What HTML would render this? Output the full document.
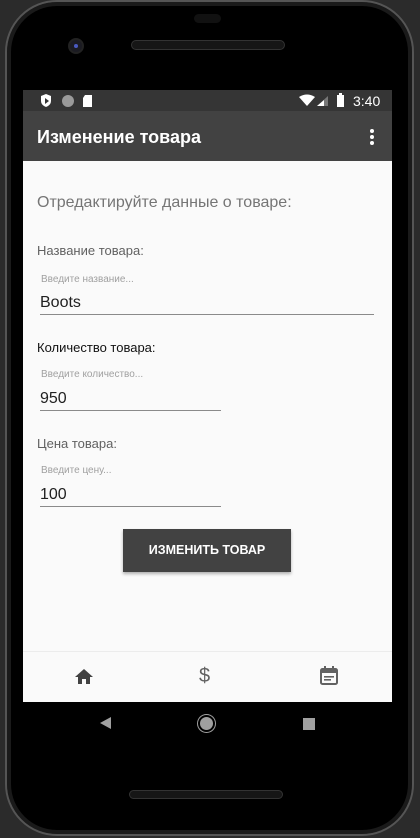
<!DOCTYPE html>
<html><head><meta charset="utf-8"><style>
*{margin:0;padding:0;box-sizing:border-box}
body{width:420px;height:838px;background:#2b2b2b;position:relative;overflow:hidden;font-family:"Liberation Sans","DejaVu Sans",sans-serif}
.phone{position:absolute;left:5px;top:0;width:409px;height:836px;background:#000;border-radius:52px;border:2px solid #555;box-shadow:inset 0 0 0 4px #1a1a1a}
.a{position:absolute;white-space:nowrap}
.screen{position:absolute;left:23px;top:90px;width:369px;height:612px;background:#fafafa;overflow:hidden}
.line{position:absolute;height:1px;background:#8a8a8a}
</style></head><body>
<div class="phone"></div>
<div class="a" style="left:194px;top:14px;width:27px;height:9px;border-radius:5px;background:#111"></div>
<div class="a" style="left:131px;top:40px;width:154px;height:10px;border-radius:5px;background:#161616;border:1px solid #333"></div>
<div class="a" style="left:68px;top:38px;width:16px;height:16px;border-radius:50%;background:#1b1b22;border:2px solid #222"></div>
<div class="a" style="left:74px;top:44px;width:4px;height:4px;border-radius:50%;background:#4a5ac0"></div>
<div class="screen">
  <div class="a" style="left:0;top:0;width:369px;height:21px;background:#353535"></div>
  <div class="a" style="left:0;top:21px;width:369px;height:50px;background:#424242"></div>
  <svg class="a" style="left:16px;top:3px" width="80" height="16">
    <path d="M2 3 L7 1 L12 3 L12 8 Q12 12 7 14 Q2 12 2 8Z" fill="#fff"/><path d="M6 5 L10 8 L6 11Z" fill="#353535"/>
    <circle cx="29" cy="8" r="6" fill="#9a9a9a"/>
    <path d="M46 2 L53 2 L53 14 L44 14 L44 5Z" fill="#fff"/>
  </svg>
  <svg class="a" style="left:276px;top:3px" width="50" height="16">
    <path d="M0 4 Q8 -1 16 4 L8 13Z" fill="#fff"/>
    <path d="M18 13 L29 13 L29 3Z" fill="#777"/><path d="M18 13 L25 13 L25 7Z" fill="#fff"/>
    <rect x="38" y="2" width="7" height="12" fill="#fff"/><rect x="40" y="0" width="3" height="2" fill="#fff"/>
  </svg>
  <div class="a" style="left:330px;top:3px;color:#fff;font-size:14px">3:40</div>
  <div class="a" style="left:14px;top:37px;color:#fff;font-size:18px;font-weight:bold">Изменение товара</div>
  <div class="a" style="left:347px;top:39px;width:4px;height:4px;border-radius:50%;background:#fff;box-shadow:0 6px 0 #fff,0 12px 0 #fff"></div>
  <div class="a" style="left:14px;top:104px;color:#757575;font-size:16px">Отредактируйте данные о товаре:</div>
  <div class="a" style="left:14px;top:153px;color:#616161;font-size:13px">Название товара:</div>
  <div class="a" style="left:18px;top:184px;color:#a0a0a0;font-size:10px">Введите название...</div>
  <div class="a" style="left:17px;top:204px;color:#212121;font-size:16px">Boots</div>
  <div class="line" style="left:17px;top:224px;width:334px"></div>
  <div class="a" style="left:14px;top:250px;color:#111;font-size:13px">Количество товара:</div>
  <div class="a" style="left:18px;top:279px;color:#a0a0a0;font-size:10px">Введите количество...</div>
  <div class="a" style="left:17px;top:300px;color:#212121;font-size:16px">950</div>
  <div class="line" style="left:17px;top:320px;width:181px"></div>
  <div class="a" style="left:14px;top:346px;color:#616161;font-size:13px">Цена товара:</div>
  <div class="a" style="left:18px;top:375px;color:#a0a0a0;font-size:10px">Введите цену...</div>
  <div class="a" style="left:17px;top:396px;color:#212121;font-size:16px">100</div>
  <div class="line" style="left:17px;top:416px;width:181px"></div>
  <div class="a" style="left:100px;top:439px;width:168px;height:43px;background:#424242;box-shadow:0 2px 3px rgba(0,0,0,.3);color:#fff;font-size:12.5px;font-weight:bold;text-align:center;line-height:43px">ИЗМЕНИТЬ ТОВАР</div>
  <div class="a" style="left:0;top:561px;width:369px;height:1px;background:#ececec"></div>
  <svg class="a" style="left:51px;top:578px" width="20" height="18"><path d="M10 1 L19 9 L16 9 L16 16 L12 16 L12 11 L8 11 L8 16 L4 16 L4 9 L1 9Z" fill="#424242"/></svg>
  <div class="a" style="left:176px;top:575px;color:#616161;font-size:20px">$</div>
  <svg class="a" style="left:296px;top:576px" width="20" height="20"><rect x="2" y="3" width="16" height="15" rx="1.5" fill="none" stroke="#616161" stroke-width="2"/><rect x="2" y="3" width="16" height="4" fill="#616161"/><rect x="5" y="0" width="2" height="4" fill="#616161"/><rect x="13" y="0" width="2" height="4" fill="#616161"/><rect x="5" y="10" width="10" height="1.6" fill="#616161"/><rect x="5" y="13" width="7" height="1.6" fill="#616161"/></svg>
</div>
<svg class="a" style="left:99px;top:716px" width="14" height="14"><path d="M12 1 L12 13 L1 7Z" fill="#a0a0a0"/></svg>
<div class="a" style="left:198px;top:715px;width:17px;height:17px;border-radius:50%;background:#a0a0a0;border:2px solid #000;box-shadow:0 0 0 1px #a0a0a0"></div>
<div class="a" style="left:303px;top:718px;width:12px;height:12px;background:#a0a0a0"></div>
<div class="a" style="left:129px;top:790px;width:154px;height:9px;border-radius:5px;background:#161616;border:1px solid #333"></div>
</body></html>
